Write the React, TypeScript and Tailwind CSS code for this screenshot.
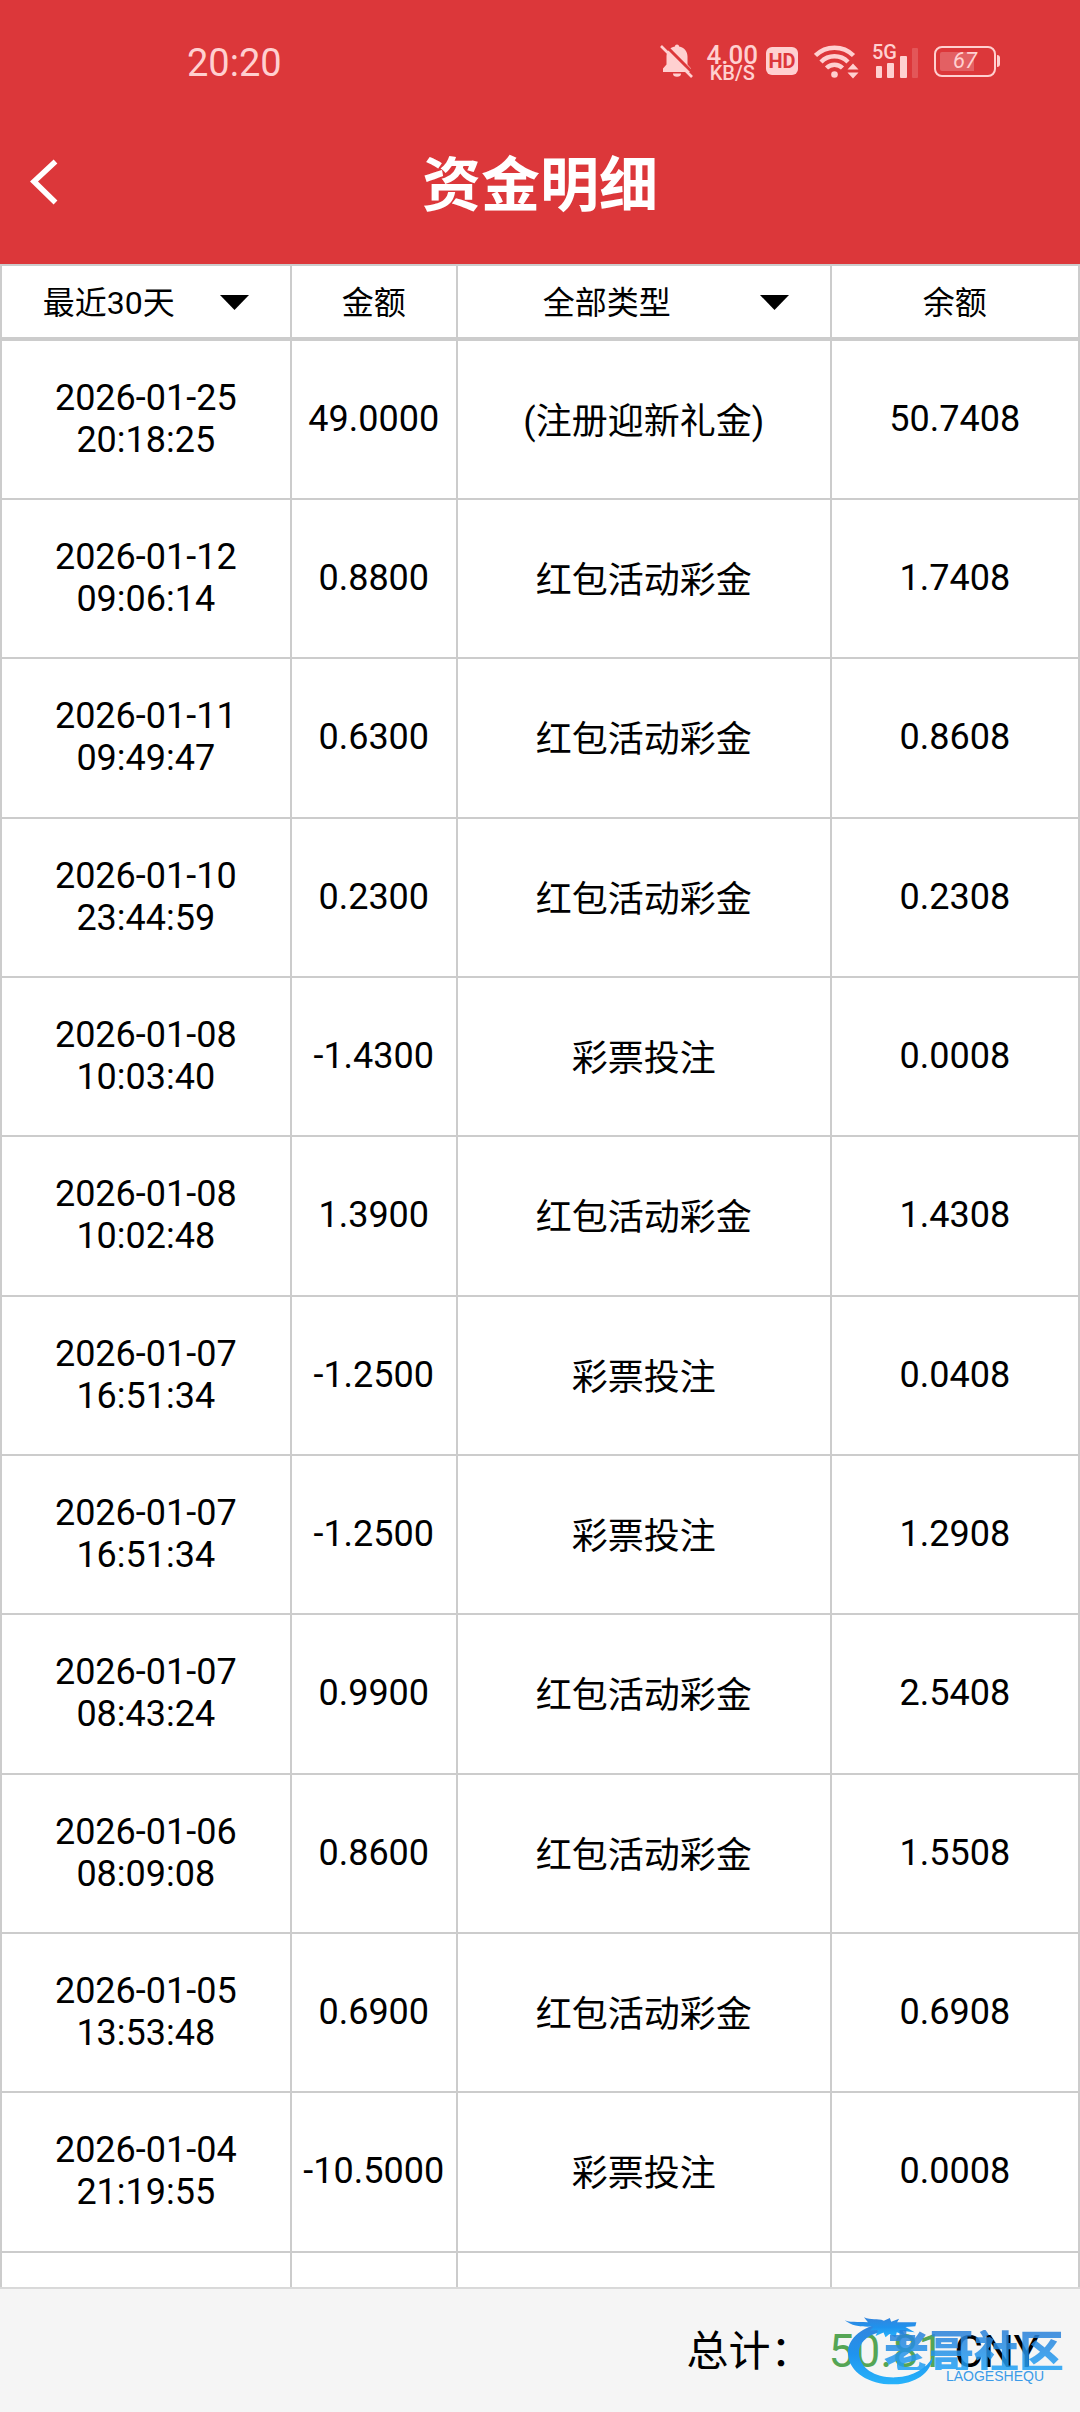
const LATIN_CJK = "font-[Roboto,'Noto_Sans_CJK_SC',sans-serif]";

type Entry = { date: string; time: string; amount: string; kind: string; balance: string };

const entries: Entry[] = [
  { date: '2026-01-25', time: '20:18:25', amount: '49.0000', kind: '(注册迎新礼金)', balance: '50.7408' },
  { date: '2026-01-12', time: '09:06:14', amount: '0.8800', kind: '红包活动彩金', balance: '1.7408' },
  { date: '2026-01-11', time: '09:49:47', amount: '0.6300', kind: '红包活动彩金', balance: '0.8608' },
  { date: '2026-01-10', time: '23:44:59', amount: '0.2300', kind: '红包活动彩金', balance: '0.2308' },
  { date: '2026-01-08', time: '10:03:40', amount: '-1.4300', kind: '彩票投注', balance: '0.0008' },
  { date: '2026-01-08', time: '10:02:48', amount: '1.3900', kind: '红包活动彩金', balance: '1.4308' },
  { date: '2026-01-07', time: '16:51:34', amount: '-1.2500', kind: '彩票投注', balance: '0.0408' },
  { date: '2026-01-07', time: '16:51:34', amount: '-1.2500', kind: '彩票投注', balance: '1.2908' },
  { date: '2026-01-07', time: '08:43:24', amount: '0.9900', kind: '红包活动彩金', balance: '2.5408' },
  { date: '2026-01-06', time: '08:09:08', amount: '0.8600', kind: '红包活动彩金', balance: '1.5508' },
  { date: '2026-01-05', time: '13:53:48', amount: '0.6900', kind: '红包活动彩金', balance: '0.6908' },
  { date: '2026-01-04', time: '21:19:55', amount: '-10.5000', kind: '彩票投注', balance: '0.0008' },
  { date: '', time: '', amount: '', kind: '', balance: '' },
];

function MutedBell() {
  return (
    <svg className="h-[34px] w-[34px]" viewBox="0 0 34 34" fill="currentColor" aria-hidden="true">
      <path d="M17 0.5c-1.2 0-2 .8-2.1 1.9C9.600 3.500 6.500 7.500 6.500 12.500v8L3 24.500V28h28v-3.500l-3.500-4v-8c0-5-3.100-9-8.400-10.100C19 1.300 18.200.5 17 .5z" />
      <path d="M13 29.500h8a4 3.200 0 0 1-8 0z" />
      <path d="M2.500-1.500 36 32" stroke="#dc373a" strokeWidth="3" />
      <path d="M1 2 32 33" stroke="currentColor" strokeWidth="2.600" />
    </svg>
  );
}

function Wifi() {
  return (
    <svg className="h-[35px] w-[46px]" viewBox="0 0 46 35" fill="none" stroke="currentColor" aria-hidden="true">
      <g strokeWidth="4.500">
        <path d="M1.500 11.500a27 27 0 0 1 38 0" />
        <path d="M7 18a19 19 0 0 1 27 0" />
        <path d="M12.500 24a11.500 11.500 0 0 1 16 0" />
      </g>
      <circle cx="20.500" cy="30.500" r="3.300" fill="currentColor" stroke="none" />
      <path d="M33.500 25.500 39 19.500l5.500 6zM33.500 28.500h11L39 34.500z" fill="currentColor" stroke="none" />
    </svg>
  );
}

function StatusBar() {
  return (
    <div className="flex h-[102px] items-center justify-between pt-5 pl-[187px] pr-20 text-[#ffd0d0]">
      <time className="pt-1 text-[38px] leading-none">20:20</time>
      <div className="flex items-center">
        <MutedBell />
        <div className="ml-3 flex flex-col items-center pt-1 font-medium">
          <span className="text-[26px] leading-5">4.00</span>
          <span className="text-xl leading-4">KB/S</span>
        </div>
        <span className="ml-2 flex h-7 w-8 items-center justify-center rounded-md bg-[#ffd0d0] text-xl leading-none font-bold text-[#dc373a]">
          HD
        </span>
        <div className="ml-4">
          <Wifi />
        </div>
        <div className="ml-3 flex flex-col">
          <span className="text-xl leading-4 font-medium">5G</span>
          <svg className="-mt-3 h-[30px] w-[48px]" viewBox="0 0 48 30" fill="currentColor" aria-hidden="true">
            <rect x="4" y="18" width="6" height="12" rx="1" />
            <rect x="15" y="15" width="7" height="15" rx="1" />
            <rect x="28" y="8" width="7" height="22" rx="1" />
            <rect x="40" y="0" width="6" height="30" rx="1" opacity="0.2" />
          </svg>
        </div>
        <div className="ml-[14px] flex items-center">
          <div className="flex h-[31px] w-[62px] items-center justify-center rounded-lg border-2 border-current bg-linear-to-r from-[#e36063] from-65% to-transparent to-65% bg-clip-content p-1">
            <span className="text-[22px] leading-none italic">67</span>
          </div>
          <div className="ml-px h-3 w-[3px] rounded-r-sm bg-current" />
        </div>
      </div>
    </div>
  );
}

function FilterSelect({ label, options }: { label: string; options: string[] }) {
  return (
    <div className="flex items-center">
      <select
        aria-label={label}
        className="h-[70px] min-w-0 flex-1 appearance-none bg-transparent pt-[2px] text-center text-[32px] text-black outline-none"
      >
        {options.map((option) => (
          <option key={option}>{option}</option>
        ))}
      </select>
      <svg className="mt-[2px] mr-[41px] ml-1 h-[15px] w-[29px]" viewBox="0 0 29 15" aria-hidden="true">
        <path d="M0 0h29L14.500 15z" />
      </svg>
    </div>
  );
}

function Watermark() {
  return (
    <div className="pointer-events-none absolute top-6 right-4 flex items-center" aria-hidden="true">
      <svg className="h-[73px] w-[93px]" viewBox="0 0 280 220">
        <defs>
          <linearGradient id="dragon" x1="0" y1="0" x2="0" y2="1">
            <stop offset="0" stopColor="#3484dc" />
            <stop offset="0.500" stopColor="#1f93ee" />
            <stop offset="1" stopColor="#27b3fb" />
          </linearGradient>
        </defs>
        <g fill="url(#dragon)">
          <path d="M112 32C50 45 12 82 15 124c4 55 65 93 140 91 62-2 110-32 116-84-18 36-60 60-112 63-62 2-108-27-111-72-2-30 22-54 62-64l-10-12z" />
          <path d="M5 22c20 8 44 3 70 6l-12-15c22 10 40 2 60 10l18-8 4 11 24-9-6 11 58 0-3 12-30 2 28 16-36-4 6 13-24-9-4 16-18-11-12 10-6-14-24 10 8-18-24 2 10-12C60 42 30 42 5 22z" />
        </g>
      </svg>
      <div className="-ml-[52px] flex flex-col items-end pt-3 font-['Noto_Sans_CJK_SC',sans-serif]">
        <span className="bg-linear-to-b from-[#2b7fd8] to-[#1fa2f6] bg-clip-text text-[45px] leading-10 font-black text-transparent opacity-85">
          老哥社区
        </span>
        <span className="mr-5 font-['Liberation_Sans',sans-serif] text-sm leading-3 text-[#3b9be8]">LAOGESHEQU</span>
      </div>
    </div>
  );
}

export default function App() {
  return (
    <div className={`flex h-screen flex-col bg-white text-black ${LATIN_CJK}`}>
      <header className="bg-[#dc373a]">
        <StatusBar />
        <div className="grid h-[162px] grid-cols-[1fr_auto_1fr] items-center text-white">
          <button type="button" aria-label="返回" className="ml-7 w-fit">
            <svg className="h-12 w-8" viewBox="0 0 32 48" fill="none" stroke="currentColor" strokeWidth="5.500" aria-hidden="true">
              <path d="M27.500 2.500 6 22.500l21.500 21" />
            </svg>
          </button>
          <h1 className="pt-1 text-[59px] leading-none font-bold">资金明细</h1>
        </div>
      </header>

      <main className="min-h-0 flex-1 overflow-hidden">
        <table className="w-full table-fixed border-separate border-spacing-0 text-center text-4xl leading-[42px]">
          <colgroup>
            <col className="w-[27%]" />
            <col className="w-[15.4%]" />
            <col className="w-[34.6%]" />
            <col />
          </colgroup>
          <thead className="text-[32px] [&_th]:h-[77px] [&_th]:border-t-2 [&_th]:border-r-2 [&_th]:border-b-4 [&_th]:border-[#cccccc] [&_th]:p-0 [&_th]:font-normal [&_th:first-child]:border-l-2">
            <tr>
              <th scope="col">
                <FilterSelect label="时间范围" options={['最近30天']} />
              </th>
              <th scope="col">
                <span className="block pt-[2px]">金额</span>
              </th>
              <th scope="col">
                <FilterSelect label="类型" options={['全部类型']} />
              </th>
              <th scope="col">
                <span className="block pt-[2px]">余额</span>
              </th>
            </tr>
          </thead>
          <tbody className="[&_td]:border-r-2 [&_td]:border-b-2 [&_td]:border-[#cccccc] [&_td:first-child]:border-l-2">
            {entries.map((entry, index) => (
              <tr key={index} className="h-[159px] nth-[3n]:h-[160px]">
                <td className="pb-[2px]">
                  {entry.date}
                  <br />
                  {entry.time}
                </td>
                <td className="pb-[2px]">{entry.amount}</td>
                <td className="pt-1">{entry.kind}</td>
                <td className="pb-[2px]">{entry.balance}</td>
              </tr>
            ))}
          </tbody>
        </table>
      </main>

      <footer className="relative flex h-[125px] items-center justify-end border-t-2 border-[#d9d9d9] bg-[#f5f5f5] pt-[2px] pr-10 text-[42px]">
        <span>总计：</span>
        <span className="ml-4 text-[46px] text-[#55a555]">50.81</span>
        <span className="ml-[10px] text-[44px]">CNY</span>
        <Watermark />
      </footer>
    </div>
  );
}
